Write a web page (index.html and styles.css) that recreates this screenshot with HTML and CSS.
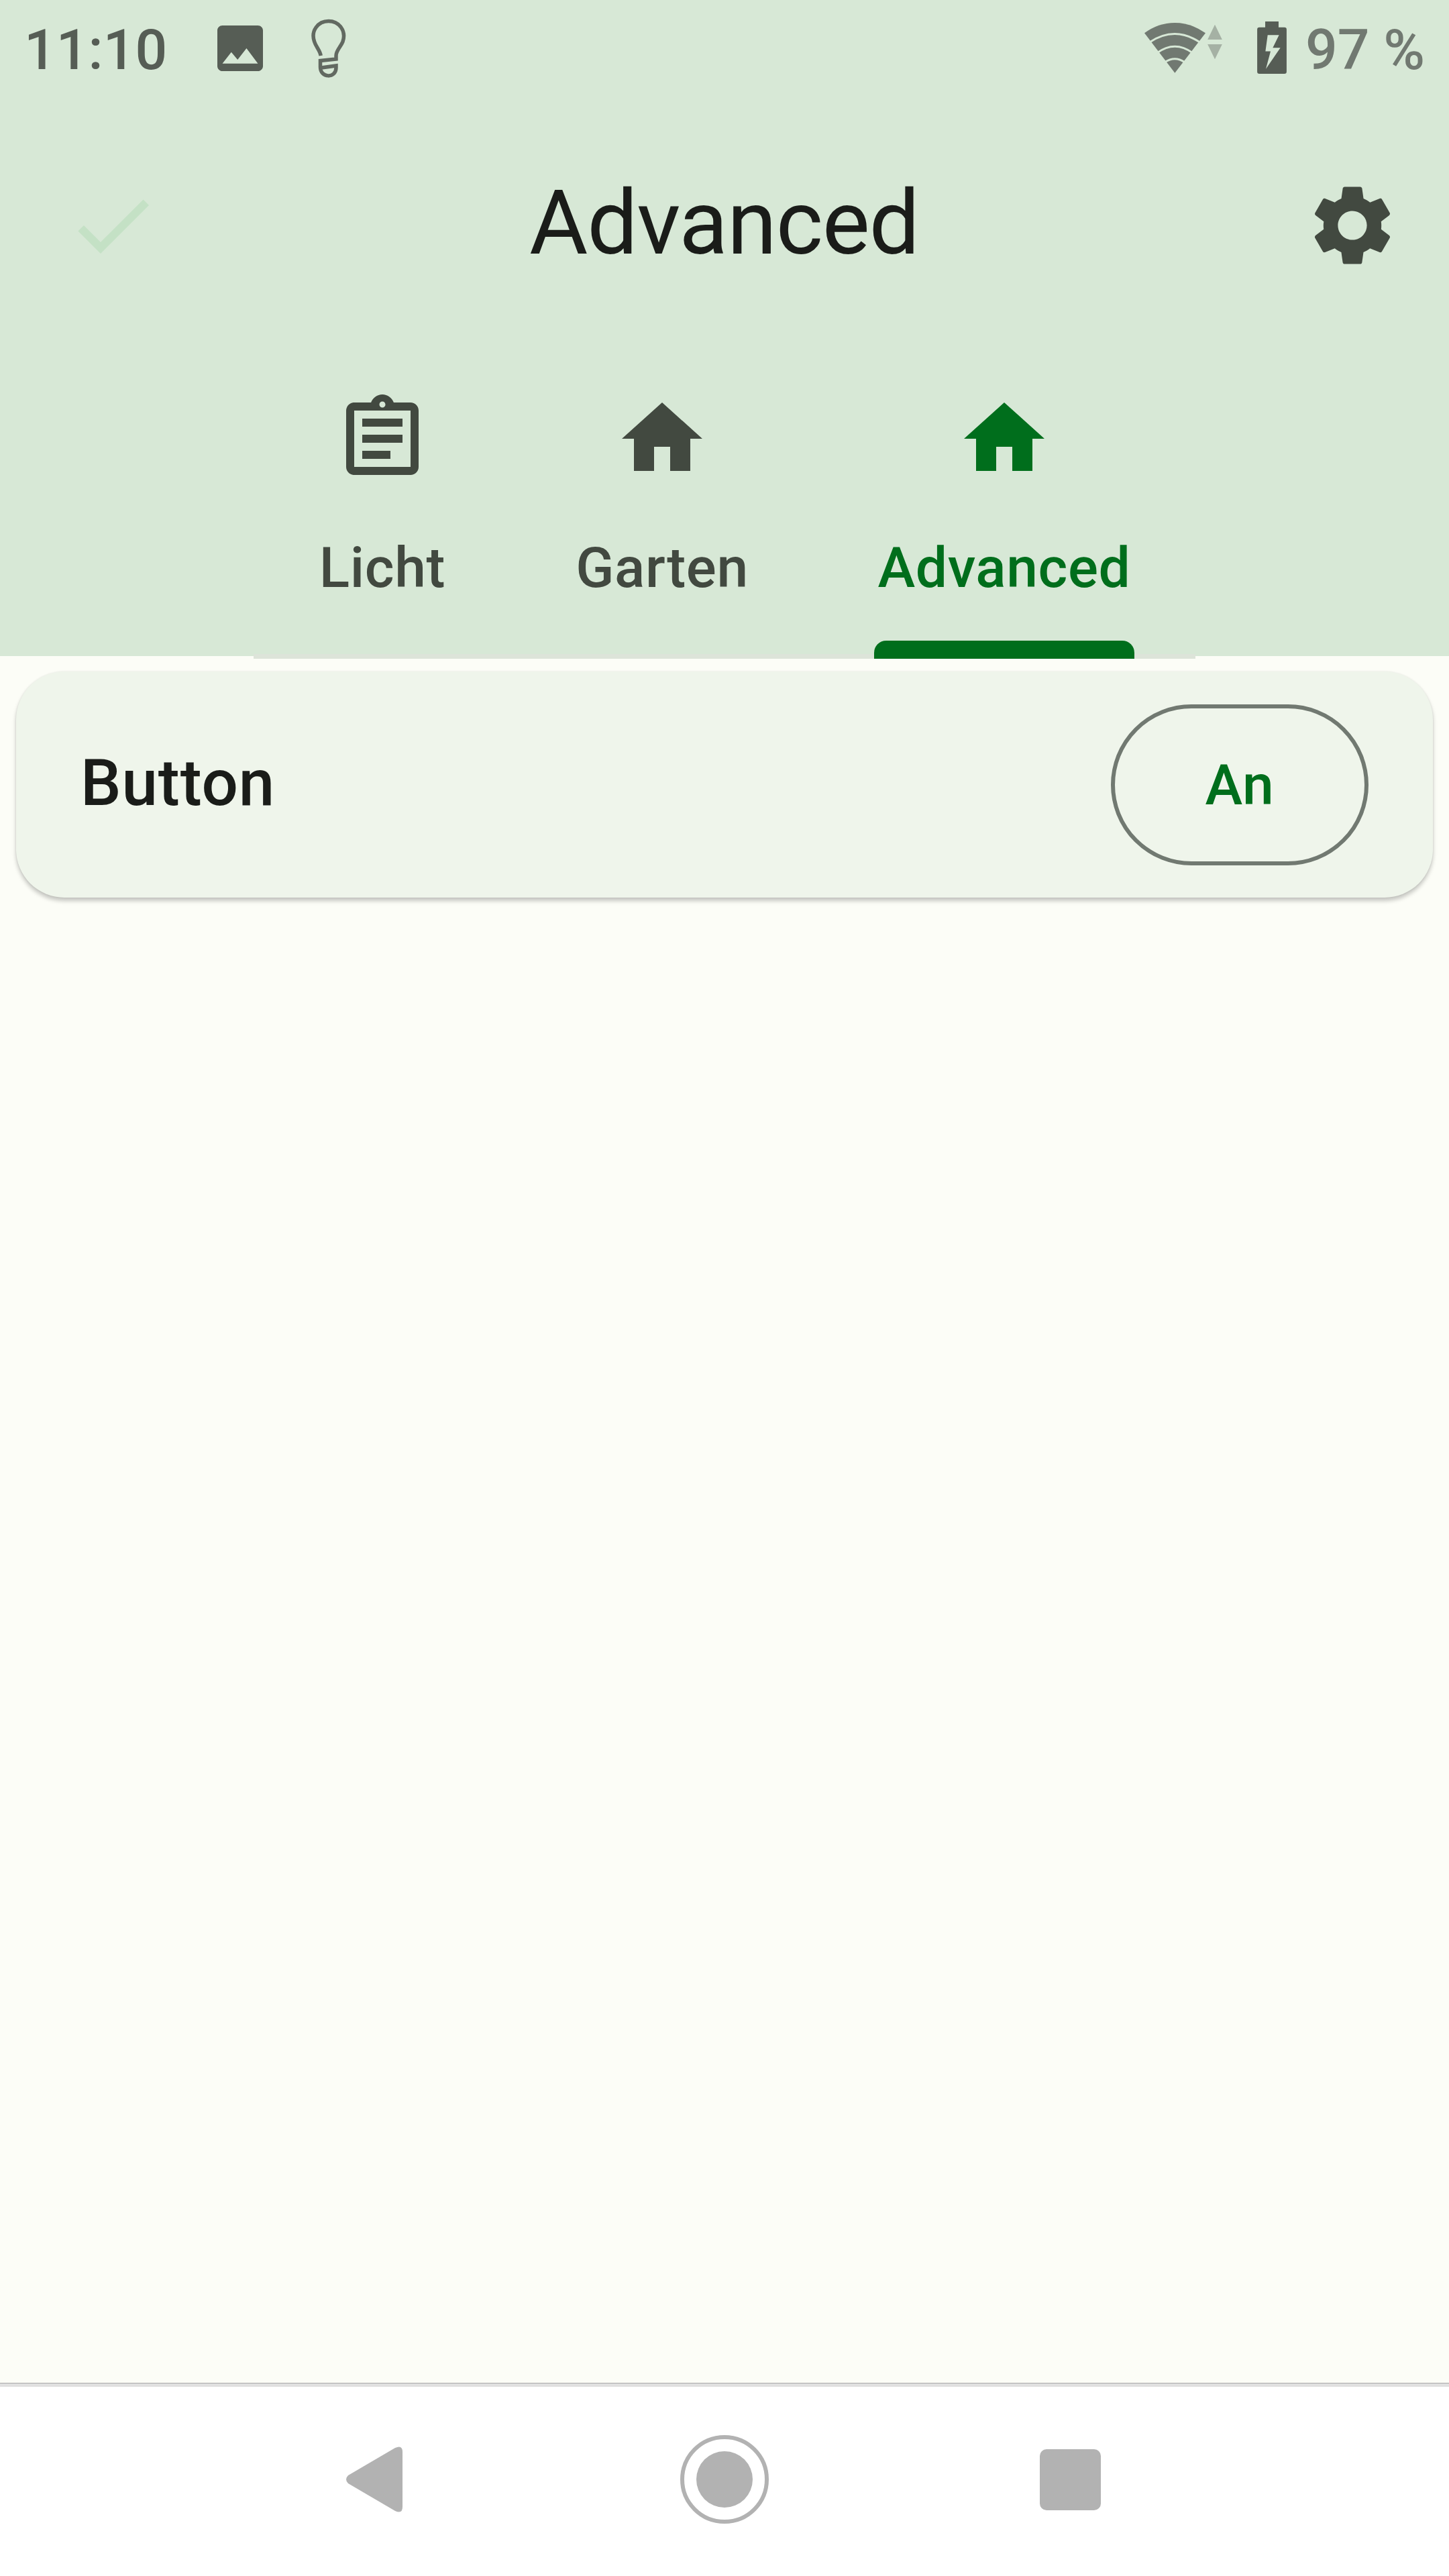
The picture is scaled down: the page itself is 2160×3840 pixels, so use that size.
FILE: index.html
```html
<!DOCTYPE html>
<html lang="de">
<head>
<meta charset="utf-8">
<title>Advanced</title>
<link rel="stylesheet" href="styles.css">
</head>
<body>
<div class="screen">
  <header class="header">
    <div class="status">
      <span class="clock">11:10</span>
      <svg class="status-image" viewBox="3 3 18 18"><path fill="#565d55" d="M21 19V5c0-1.100-.9-2-2-2H5c-1.100 0-2 .9-2 2v14c0 1.100.9 2 2 2h14c1.100 0 2-.9 2-2zM8.500 13.500l2.500 3.010L14.500 12l4.500 6H5l3.500-4.500z"/></svg>
      <svg class="status-bulb" viewBox="464 28 52 88" fill="none" stroke="#626961" stroke-width="5.500"><path d="M478.200 83C477 75 471 70 468.600 62C463 46 474 31.500 489.800 31.500C505.500 31.500 516.500 46 511 62C508 70 501 75 501 83V88L477.500 90.500V100C477.500 117 501 117 501 101V98L479 101"/></svg>
      <svg class="status-wifi" viewBox="77 95 273 240"><path fill="#717971" d="M213 325L77 147Q139 101 213 101T350 147Z"/><g fill="none" stroke="#d7e8d6" stroke-width="9"><path d="M100 188Q213 113 326 189"/><path d="M134 235Q213 178 292 235"/><path d="M168 277Q213 247 257 277"/></g></svg>
      <svg class="status-arrows" viewBox="361 95 65 240"><path fill="#a5b1a4" d="M393.500 109L426 176H361ZM361 197H426L393.500 264Z"/></svg>
      <svg class="status-battery" viewBox="582 95 132 235"><path fill="#565d55" fill-rule="evenodd" d="M618 95H678V121H704Q714 121 714 131V320Q714 330 704 330H592Q582 330 582 320V131Q582 121 592 121H618ZM629 156L619 229H642L621 308L686 213H652L680 156Z"/></svg>
      <span class="percent">97&nbsp;%</span>
    </div>
    <div class="appbar">
      <svg class="icon" viewBox="0 0 24 24"><path fill="#c4e1c5" d="M9 16.170L4.830 12l-1.420 1.410L9 19 21 7l-1.410-1.410z"/></svg>
      <h1 class="title">Advanced</h1>
      <svg class="icon" viewBox="0 0 24 24"><path fill="#424940" d="M19.140,12.940c0.040-0.300,0.060-0.610,0.060-0.940c0-0.320-0.020-0.640-0.070-0.940l2.030-1.580c0.180-0.140,0.230-0.410,0.120-0.610l-1.920-3.320c-0.120-0.220-0.370-0.290-0.590-0.220l-2.390,0.960c-0.500-0.380-1.030-0.700-1.620-0.940L14.400,2.810c-0.040-0.240-0.240-0.410-0.480-0.410h-3.840c-0.240,0-0.430,0.170-0.470,0.410L9.250,5.350C8.660,5.590,8.120,5.920,7.630,6.290L5.240,5.330c-0.220-0.080-0.470,0-0.590,0.220L2.740,8.870C2.620,9.080,2.660,9.340,2.860,9.480l2.030,1.580C4.840,11.360,4.800,11.690,4.800,12s0.020,0.640,0.070,0.940l-2.030,1.580c-0.180,0.140-0.230,0.410-0.120,0.610l1.920,3.320c0.120,0.220,0.370,0.290,0.590,0.220l2.390-0.960c0.500,0.380,1.030,0.700,1.620,0.940l0.360,2.540c0.050,0.240,0.240,0.410,0.480,0.410h3.840c0.240,0,0.440-0.170,0.470-0.410l0.360-2.540c0.590-0.240,1.130-0.560,1.620-0.940l2.390,0.960c0.220,0.080,0.470,0,0.590-0.220l1.920-3.320c0.120-0.220,0.070-0.470-0.120-0.610L19.140,12.940zM12,15.600c-1.980,0-3.600-1.620-3.600-3.600s1.620-3.600,3.600-3.600s3.600,1.620,3.600,3.600S13.980,15.600,12,15.600z"/></svg>
    </div>
    <nav class="tabs">
      <div class="tab tab-licht">
        <svg class="icon" viewBox="0 0 24 24"><path fill="currentColor" d="M7 15h7v2H7zm0-4h10v2H7zm0-4h10v2H7zm12-4h-4.180C14.400 1.840 13.300 1 12 1c-1.300 0-2.400.84-2.820 2H5c-.14 0-.27.01-.4.04-.39.08-.74.28-1.010.55-.18.18-.33.4-.43.64-.1.23-.16.49-.16.77v14c0 .27.06.54.16.78.1.24.25.45.43.64.27.27.62.47 1.010.55.13.02.26.03.4.03h14c1.100 0 2-.9 2-2V5c0-1.100-.9-2-2-2zm-7-.25c.41 0 .75.34.75.75s-.34.75-.75.75-.75-.34-.75-.75.34-.75.75-.75zM19 19H5V5h14v14z"/></svg>
        <span class="label">Licht</span>
      </div>
      <div class="tab tab-garten">
        <svg class="icon" viewBox="0 0 24 24"><path fill="currentColor" d="M10 20v-6h4v6h5v-8h3L12 3 2 12h3v8z"/></svg>
        <span class="label">Garten</span>
      </div>
      <div class="tab tab-advanced">
        <svg class="icon" viewBox="0 0 24 24"><path fill="currentColor" d="M10 20v-6h4v6h5v-8h3L12 3 2 12h3v8z"/></svg>
        <span class="label">Advanced</span>
        <span class="indicator"></span>
      </div>
    </nav>
  </header>
  <main class="content">
    <section class="card">
      <span class="card-title">Button</span>
      <button class="outlined">An</button>
    </section>
  </main>
  <footer class="navbar">
    <svg class="nav-back" viewBox="0 0 84 98"><path fill="#b2b2b2" d="M3 43L73 2Q84-3 84 8V90Q84 101 73 96L3 55Q-3 49 3 43Z"/></svg>
    <svg class="nav-home" viewBox="0 0 132 132"><circle cx="66" cy="66" r="63" fill="none" stroke="#b2b2b2" stroke-width="6"/><circle cx="66" cy="66" r="42" fill="#b2b2b2"/></svg>
    <span class="nav-recent"></span>
  </footer>
</div>
</body>
</html>
```
FILE: styles.css
```css
* {
  box-sizing: border-box;
}

body {
  margin: 0;
  font-family: Roboto, sans-serif;
  color: #1a1c19;
}

svg {
  display: block;
  flex: none;
}

.screen {
  display: flex;
  flex-direction: column;
  width: 2160px;
  height: 3840px;
  background: #fcfdf7;
}

.header {
  flex: none;
  height: 978px;
  background: #d7e8d6;
}

.status {
  display: flex;
  align-items: flex-start;
  height: 144px;
  padding-left: 36px;
  font-size: 84px;
  font-weight: 500;
  line-height: 100px;
  color: #565d55;
}

.clock {
  width: 288px;
  margin-top: 25px;
}

.status-image {
  width: 68px;
  height: 68px;
  margin-top: 38px;
}

.status-bulb {
  width: 52px;
  height: 88px;
  margin: 28px 0 0 72px;
}

.status-wifi {
  width: 91px;
  height: 80px;
  margin: 32px 0 0 auto;
}

.status-arrows {
  width: 22px;
  height: 80px;
  margin: 32px 0 0 3px;
}

.status-battery {
  width: 44px;
  height: 78px;
  margin: 32px 28px 0 52px;
}

.percent {
  width: 214px;
  margin-top: 25px;
  color: #717971;
  white-space: nowrap;
}

.appbar {
  display: flex;
  align-items: center;
  justify-content: space-between;
  height: 384px;
  padding: 0 72px 0 96px;
}

.icon {
  width: 144px;
  height: 144px;
}

.title {
  margin: 0 25px 6px 0;
  font-size: 134px;
  font-weight: 400;
  line-height: 160px;
  letter-spacing: -1.2px;
}

.tabs {
  display: flex;
  width: 1404px;
  height: 454px;
  margin: 0 auto;
  background: linear-gradient(#d7e8d6 447px, #dde4d9 447px);
}

.tab {
  display: flex;
  flex-direction: column;
  align-items: center;
  height: 454px;
  padding-top: 54px;
  color: #424940;
}

.tab-licht {
  width: 384px;
}

.tab-garten {
  width: 450px;
}

.tab-advanced {
  width: 570px;
  color: #006e1c;
}

.label {
  margin-top: 71px;
  font-size: 84px;
  font-weight: 500;
  line-height: 100px;
  letter-spacing: 0.6px;
}

.indicator {
  width: 388px;
  height: 27px;
  margin-top: auto;
  border-radius: 18px 18px 0 0;
  background: #006e1c;
}

.content {
  flex: 1;
  padding: 23px 24px 0;
}

.card {
  display: flex;
  align-items: center;
  justify-content: space-between;
  height: 337px;
  padding: 0 96px;
  border-radius: 72px;
  background: #eff5eb;
  box-shadow: 0 5px 6px rgba(0, 0, 0, 0.22), 0 0 3px rgba(0, 0, 0, 0.08);
}

.card-title {
  margin-bottom: 5px;
  font-size: 96px;
  font-weight: 500;
  line-height: 112px;
  letter-spacing: 0.9px;
}

.outlined {
  width: 384px;
  height: 240px;
  padding: 3px 0 0;
  border: 6px solid #717971;
  border-radius: 120px;
  background: none;
  font: 500 84px/100px Roboto, sans-serif;
  letter-spacing: 0.6px;
  color: #006e1c;
}

.navbar {
  display: flex;
  align-items: center;
  flex: none;
  height: 288px;
  padding-left: 516px;
  background: linear-gradient(#a9a9a9 1px, #e0e0e0 1px, #e0e0e0 6px, #fff 6px);
}

.nav-back {
  width: 84px;
  height: 98px;
}

.nav-home {
  width: 132px;
  height: 132px;
  margin-left: 414px;
}

.nav-recent {
  width: 91px;
  height: 91px;
  margin-left: 404px;
  border-radius: 10px;
  background: #b2b2b2;
}
```
